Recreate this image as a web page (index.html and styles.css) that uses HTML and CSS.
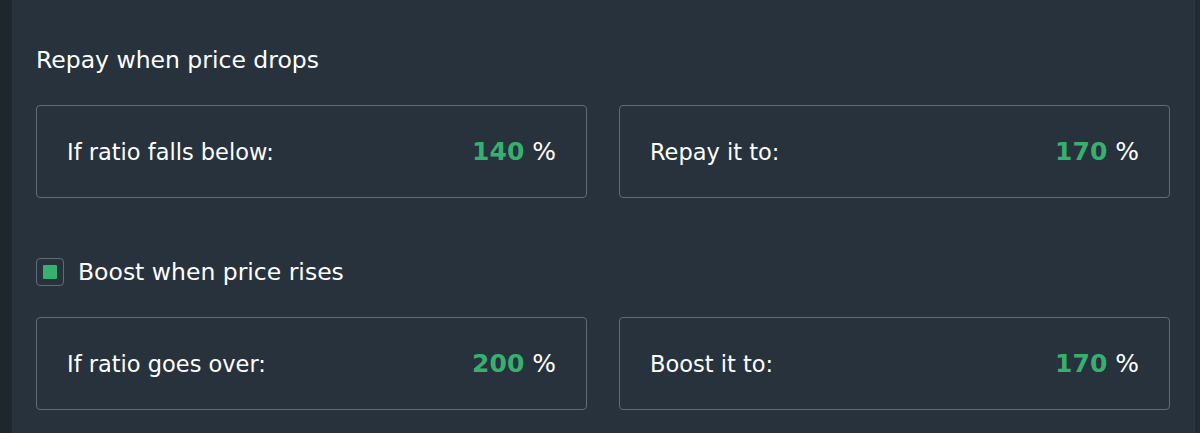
FILE: index.html
```html
<!DOCTYPE html>
<html>
<head>
<meta charset="utf-8">
<link rel="stylesheet" href="styles.css">
</head>
<body>
<div class="page">
  <div class="strip-left"></div>
  <main class="main">
    <section class="group">
      <h2 class="group-title">Repay when price drops</h2>
      <div class="fields">
        <div class="field">
          <span class="label">If ratio falls below:</span>
          <span class="value"><b>140</b> %</span>
        </div>
        <div class="field">
          <span class="label">Repay it to:</span>
          <span class="value"><b>170</b> %</span>
        </div>
      </div>
    </section>
    <section class="group group-boost">
      <div class="group-title check-title">
        <span class="checkbox"><span class="check-fill"></span></span>
        <span>Boost when price rises</span>
      </div>
      <div class="fields">
        <div class="field">
          <span class="label">If ratio goes over:</span>
          <span class="value"><b>200</b> %</span>
        </div>
        <div class="field">
          <span class="label">Boost it to:</span>
          <span class="value"><b>170</b> %</span>
        </div>
      </div>
    </section>
  </main>
  <div class="strip-right"></div>
</div>
</body>
</html>
```

FILE: styles.css
```css
* { box-sizing: border-box; }
html, body { margin: 0; padding: 0; }
body {
  background: #27323c;
  font-family: "DejaVu Sans", sans-serif;
  color: #ffffff;
}
.page {
  display: flex;
  width: 1200px;
  height: 433px;
  overflow: hidden;
}
.strip-left { width: 12px; background: #1f272e; flex: none; }
.strip-right { width: 5px; background: #222b33; flex: none; }
.main {
  flex: 1;
  padding: 44px 25px 0 24px;
  display: flex;
  flex-direction: column;
}
.group-title {
  margin: 0;
  font-size: 23.5px;
  font-weight: 400;
  line-height: 32px;
  height: 32px;
}
.fields {
  display: grid;
  grid-template-columns: 1fr 1fr;
  gap: 32px;
  margin-top: 29px;
}
.field {
  height: 93px;
  border: 1.5px solid #5e6c79;
  border-radius: 4px;
  display: flex;
  align-items: center;
  justify-content: space-between;
  padding: 0 30px;
  font-size: 22.5px;
}
.value { font-size: 25px; }
.value b { color: #37b06f; font-weight: 700; }
.group-boost { margin-top: 58px; }
.check-title {
  display: flex;
  align-items: center;
  gap: 14px;
}
.checkbox {
  width: 28px;
  height: 28px;
  border: 1.5px solid #5e6c79;
  border-radius: 4px;
  display: flex;
  align-items: center;
  justify-content: center;
}
.check-fill {
  width: 14px;
  height: 14px;
  background: #37b06f;
  border-radius: 1px;
}
```
